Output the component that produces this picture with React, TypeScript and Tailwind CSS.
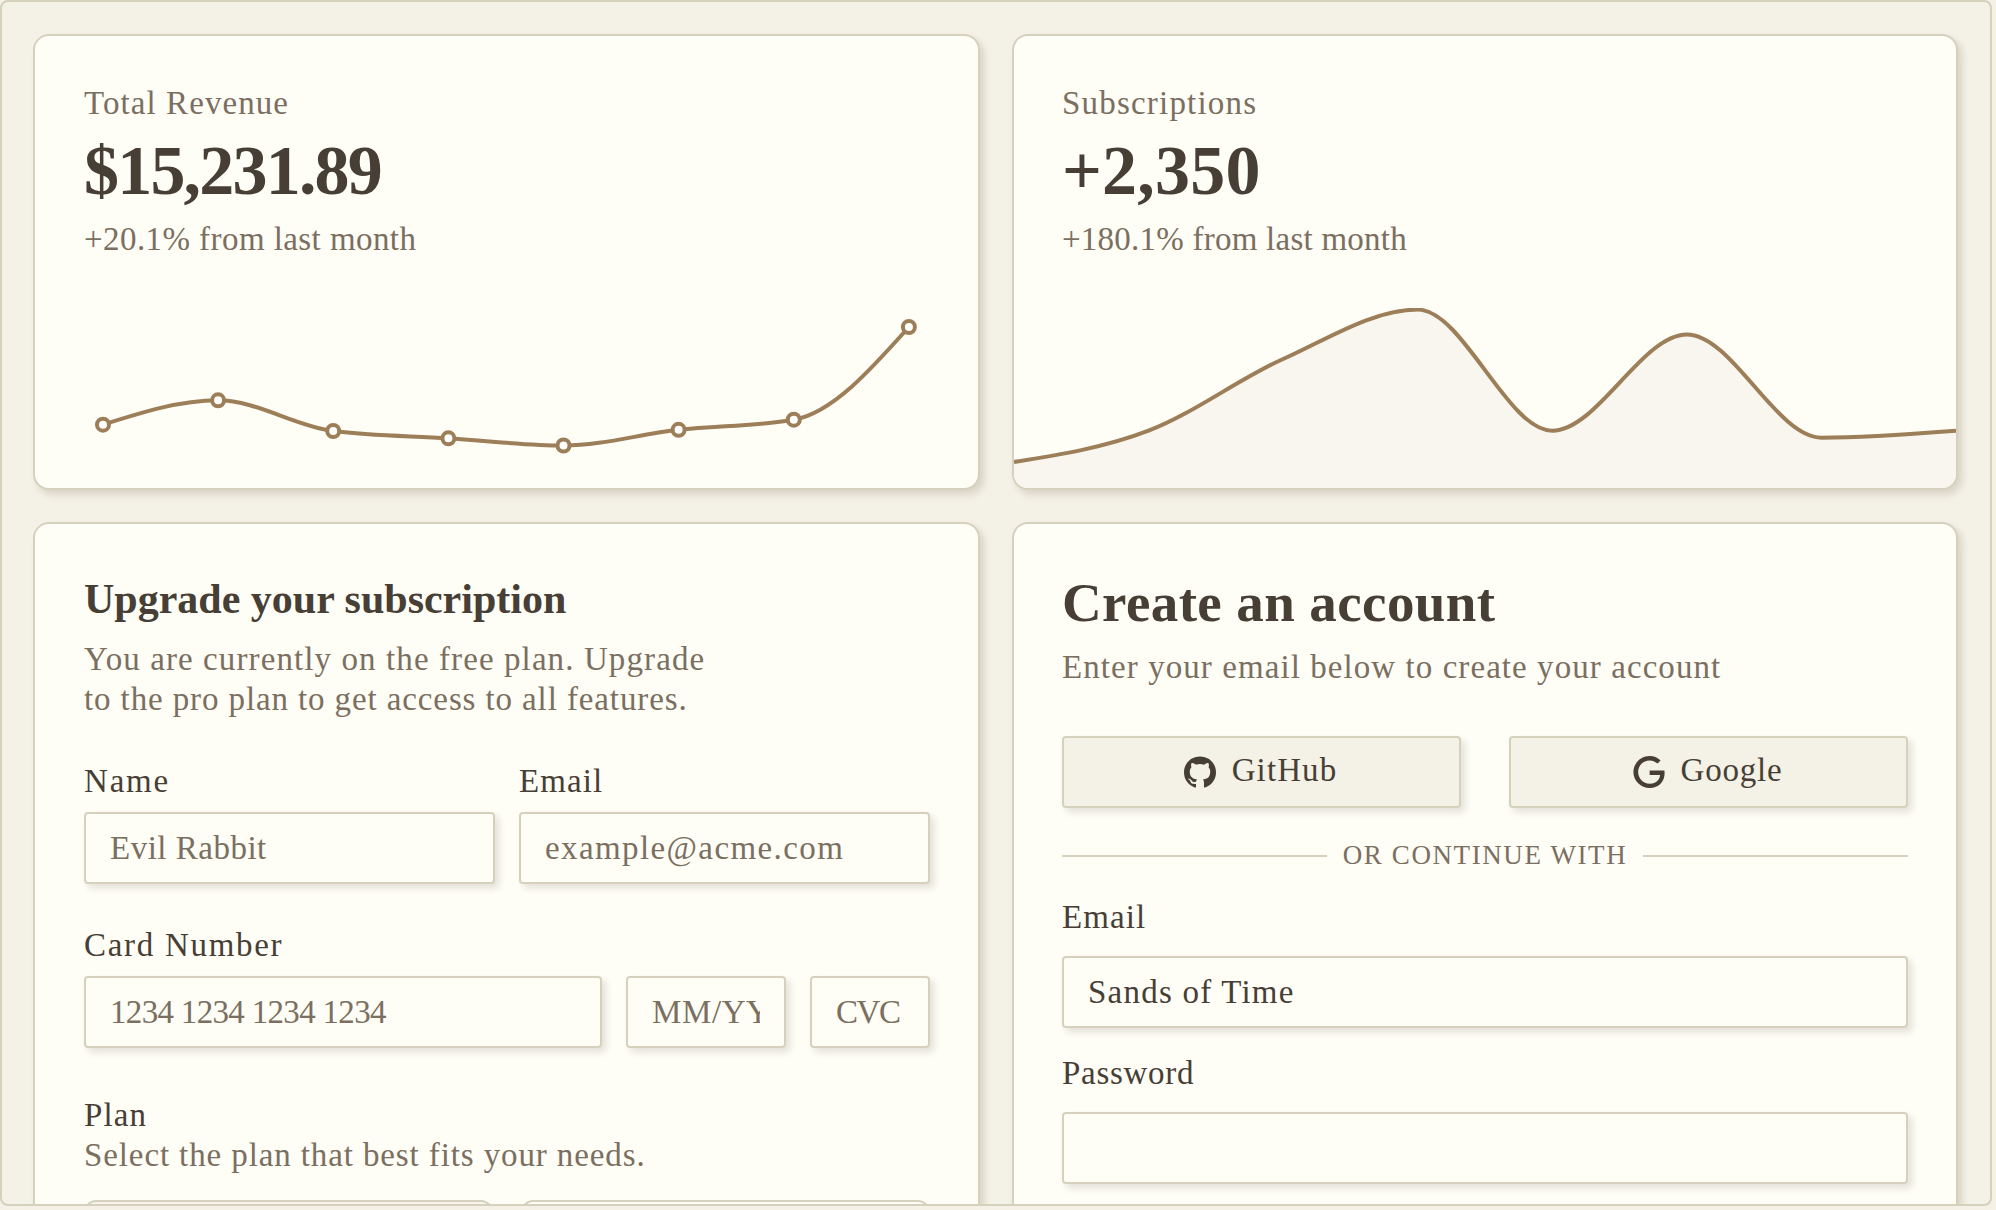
import type { ReactNode } from "react";

type Point = [number, number];

/** Monotone cubic interpolation through the points, as an SVG path. */
function monotonePath(points: Point[]): string {
  const n = points.length;
  const slope = (i: number) =>
    (points[i + 1][1] - points[i][1]) / (points[i + 1][0] - points[i][0]);
  const tangents = points.map((_, i) => {
    if (i === 0 || i === n - 1) return 0;
    const s0 = slope(i - 1);
    const s1 = slope(i);
    const h0 = points[i][0] - points[i - 1][0];
    const h1 = points[i + 1][0] - points[i][0];
    const p = (s0 * h1 + s1 * h0) / (h0 + h1);
    return (
      (Math.sign(s0) + Math.sign(s1)) *
      Math.min(Math.abs(s0), Math.abs(s1), 0.5 * Math.abs(p))
    );
  });
  tangents[0] = (3 * slope(0) - tangents[1]) / 2;
  tangents[n - 1] = (3 * slope(n - 2) - tangents[n - 2]) / 2;

  let d = `M${points[0][0]},${points[0][1]}`;
  for (let i = 0; i < n - 1; i++) {
    const [x0, y0] = points[i];
    const [x1, y1] = points[i + 1];
    const dx = (x1 - x0) / 3;
    d += `C${x0 + dx},${y0 + dx * tangents[i]},${x1 - dx},${y1 - dx * tangents[i + 1]},${x1},${y1}`;
  }
  return d;
}

const revenue: Point[] = [
  [68, 124.7],
  [183.1, 100.3],
  [298.2, 131],
  [413.4, 138.3],
  [528.5, 145.5],
  [643.6, 129.8],
  [758.8, 119.7],
  [873.9, 27],
];

const subscriptions: Point[] = [
  [0, 154],
  [134.6, 122.7],
  [269.1, 51],
  [403.7, 1.6],
  [538.3, 122.7],
  [672.9, 26.4],
  [807.4, 129.7],
  [942, 122.8],
];

function RevenueChart() {
  return (
    <svg className="block h-[186px] w-[943px]" viewBox="0 0 943 186" fill="none">
      <path d={monotonePath(revenue)} stroke="#9c7e58" strokeWidth={4} />
      {revenue.map(([x, y]) => (
        <circle key={x} cx={x} cy={y} r={6} fill="#fff" stroke="#9c7e58" strokeWidth={4} />
      ))}
    </svg>
  );
}

function SubscriptionsChart() {
  const line = monotonePath(subscriptions);
  return (
    <svg className="block h-[180px] w-[942px] overflow-hidden" viewBox="0 0 942 180" fill="none">
      <path d={`${line}L942,180L0,180Z`} fill="#f8f6ef" />
      <path d={line} stroke="#9c7e58" strokeWidth={4} />
    </svg>
  );
}

function GitHubIcon() {
  return (
    <svg className="size-8 shrink-0" viewBox="0 0 438.549 438.549" fill="currentColor">
      <path d="M409.132 114.573c-19.608-33.596-46.205-60.194-79.798-79.8-33.598-19.607-70.277-29.408-110.063-29.408-39.781 0-76.472 9.804-110.063 29.408-33.596 19.605-60.192 46.204-79.8 79.8C9.803 148.168 0 184.854 0 224.63c0 47.78 13.94 90.745 41.827 128.906 27.884 38.164 63.906 64.572 108.063 79.227 5.14.954 8.945.283 11.419-1.996 2.475-2.282 3.711-5.14 3.711-8.562 0-.571-.049-5.708-.144-15.417a2549.81 2549.81 0 01-.144-25.406l-6.567 1.136c-4.187.767-9.469 1.092-15.846 1-6.374-.089-12.991-.757-19.842-1.999-6.854-1.231-13.229-4.086-19.13-8.559-5.898-4.473-10.085-10.328-12.56-17.556l-2.855-6.57c-1.903-4.374-4.899-9.233-8.992-14.559-4.093-5.331-8.232-8.945-12.419-10.848l-1.999-1.431c-1.332-.951-2.568-2.098-3.711-3.429-1.142-1.331-1.997-2.663-2.568-3.997-.572-1.335-.098-2.43 1.427-3.289 1.525-.859 4.281-1.276 8.28-1.276l5.708.853c3.807.763 8.516 3.042 14.133 6.851 5.614 3.806 10.229 8.754 13.846 14.842 4.38 7.806 9.657 13.754 15.846 17.847 6.184 4.093 12.419 6.136 18.699 6.136 6.28 0 11.704-.476 16.274-1.423 4.565-.952 8.848-2.383 12.847-4.285 1.713-12.758 6.377-22.559 13.988-29.41-10.848-1.14-20.601-2.857-29.264-5.14-8.658-2.286-17.605-5.996-26.835-11.14-9.235-5.137-16.896-11.516-22.985-19.126-6.09-7.614-11.088-17.61-14.987-29.979-3.901-12.374-5.852-26.648-5.852-42.826 0-23.035 7.52-42.637 22.557-58.817-7.044-17.318-6.379-36.732 1.997-58.24 5.52-1.715 13.706-.428 24.554 3.853 10.85 4.283 18.794 7.952 23.84 10.994 5.046 3.041 9.089 5.618 12.135 7.708 17.705-4.947 35.976-7.421 54.818-7.421s37.117 2.474 54.823 7.421l10.849-6.849c7.419-4.57 16.18-8.758 26.262-12.565 10.088-3.805 17.802-4.853 23.134-3.138 8.562 21.509 9.325 40.922 2.279 58.24 15.036 16.18 22.559 35.787 22.559 58.817 0 16.178-1.958 30.497-5.853 42.966-3.9 12.471-8.941 22.457-15.125 29.979-6.191 7.521-13.901 13.85-23.131 18.986-9.232 5.14-18.182 8.85-26.84 11.136-8.662 2.286-18.415 4.004-29.263 5.146 9.894 8.562 14.842 22.077 14.842 40.539v60.237c0 3.422 1.19 6.279 3.572 8.562 2.379 2.279 6.136 2.95 11.276 1.995 44.163-14.653 80.185-41.062 108.068-79.226 27.88-38.161 41.825-81.126 41.825-128.906-.01-39.771-9.818-76.454-29.414-110.049z" />
    </svg>
  );
}

function GoogleIcon() {
  return (
    <svg className="size-8 shrink-0" viewBox="0 0 24 24" fill="currentColor">
      <path d="M12.48 10.92v3.28h7.84c-.24 1.84-.853 3.187-1.787 4.133-1.147 1.147-2.933 2.4-6.053 2.4-4.827 0-8.6-3.893-8.6-8.72s3.773-8.72 8.6-8.72c2.6 0 4.507 1.027 5.907 2.347l2.307-2.307C18.747 1.44 16.133 0 12.48 0 5.867 0 .307 5.387.307 12s5.56 12 12.173 12c3.573 0 6.267-1.173 8.373-3.36 2.16-2.16 2.84-5.213 2.84-7.667 0-.76-.053-1.467-.173-2.053H12.48z" />
    </svg>
  );
}

function Card({ className, children }: { className: string; children: ReactNode }) {
  return (
    <section
      className={`shrink-0 rounded-2xl border-2 border-[#d6d1bd] bg-[#fefdf6] shadow-[4px_4px_6px_rgba(70,60,40,0.11),4px_6px_10px_rgba(70,60,40,0.05)] ${className}`}
    >
      {children}
    </section>
  );
}

function Stat(props: {
  label: string;
  labelClass: string;
  value: string;
  valueClass: string;
  note: string;
  noteClass: string;
  className: string;
}) {
  return (
    <div className={`pt-[47px] ${props.className}`}>
      <p className={`h-10 leading-10 text-[#7a6f60] ${props.labelClass}`}>{props.label}</p>
      <p className={`mt-2 h-20 text-[70px] leading-[80px] font-bold ${props.valueClass}`}>{props.value}</p>
      <p className={`mt-2 h-10 leading-10 text-[#7a6f60] ${props.noteClass}`}>{props.note}</p>
    </div>
  );
}

const inputBase =
  "block h-[72px] min-w-0 rounded-[4px] border-2 border-[#d6d1bd] bg-[#fefdf6] px-6 placeholder:text-[#7a6f60] placeholder:opacity-100 outline-none shadow-[4px_4px_6px_rgba(70,60,40,0.10),4px_5px_10px_rgba(70,60,40,0.04)]";

const buttonBase =
  "flex h-[72px] flex-1 items-center justify-center gap-4 rounded-[4px] border-2 border-[#d6d1bd] bg-[#f4f1e6] pr-[2px] shadow-[4px_4px_6px_rgba(70,60,40,0.10),4px_5px_10px_rgba(70,60,40,0.04)]";

export default function App() {
  return (
    <div className="h-[1210px] w-[1996px] overflow-hidden bg-[#f5f1e6] font-['Liberation_Serif',serif] text-[33px] text-[#473f35]">
      <main className="flex h-[1206px] w-[1992px] gap-8 overflow-hidden rounded-lg border-2 border-[#d6d1bd] bg-[#f4f1e6] pt-8 pr-8 pl-[31px]">
        <div className="flex w-[947px] flex-col gap-8">
          <Card className="h-[456px]">
            <Stat
              className="pr-12 pl-[49px]"
              label="Total Revenue"
              labelClass="tracking-[1.08px]"
              value="$15,231.89"
              valueClass="tracking-[-1.8px]"
              note="+20.1% from last month"
              noteClass="tracking-[0.43px]"
            />
            <div className="mt-[41px]">
              <RevenueChart />
            </div>
          </Card>

          <Card className="h-[800px] pt-[51px] pr-12 pl-[49px]">
            <h2 className="h-12 text-[42px] leading-[48px] font-bold">Upgrade your subscription</h2>
            <p className="mt-4 leading-10 whitespace-nowrap text-[#7a6f60]">
              <span className="block tracking-[1.1px]">You are currently on the free plan. Upgrade</span>
              <span className="block tracking-[0.89px]">to the pro plan to get access to all features.</span>
            </p>
            <div className="mt-[42px] grid grid-cols-2 gap-6">
              <label className="flex flex-col gap-[11px]">
                <span className="h-10 leading-10 tracking-[1.8px]">Name</span>
                <input className={`${inputBase} tracking-[0.5px]`} placeholder="Evil Rabbit" />
              </label>
              <label className="flex flex-col gap-[11px]">
                <span className="h-10 leading-10 tracking-[1.1px]">Email</span>
                <input className={`${inputBase} tracking-[1.4px]`} placeholder="example@acme.com" />
              </label>
            </div>
            <div className="mt-[41px]">
              <p className="h-10 leading-10 tracking-[1.7px]">Card Number</p>
              <div className="mt-[11px] flex gap-6">
                <input className={`${inputBase} flex-1 tracking-[-0.68px]`} placeholder="1234 1234 1234 1234" />
                <input className={`${inputBase} w-40 tracking-[0.6px]`} placeholder="MM/YY" />
                <input className={`${inputBase} w-[120px] tracking-[-1.4px]`} placeholder="CVC" />
              </div>
            </div>
            <p className="mt-[47px] h-10 leading-10 tracking-[1.1px]">Plan</p>
            <p className="h-10 leading-10 tracking-[0.89px] text-[#7a6f60]">
              Select the plan that best fits your needs.
            </p>
            <div className="mt-[25px] grid grid-cols-2 gap-7">
              <div className="h-32 rounded-xl border-2 border-[#d6d1bd] bg-[#f8f5ec]" />
              <div className="h-32 rounded-xl border-2 border-[#d6d1bd]" />
            </div>
          </Card>
        </div>

        <div className="flex w-[946px] flex-col gap-8">
          <Card className="h-[456px] overflow-hidden">
            <Stat
              className="px-12"
              label="Subscriptions"
              labelClass="tracking-[1.2px]"
              value="+2,350"
              valueClass="tracking-[0.2px]"
              note="+180.1% from last month"
              noteClass="tracking-[0.24px]"
            />
            <div className="mt-[49px]">
              <SubscriptionsChart />
            </div>
          </Card>

          <Card className="h-[800px] px-12 pt-[49px]">
            <h2 className="h-[60px] text-[55px] leading-[60px] font-bold tracking-[0.4px]">Create an account</h2>
            <p className="mt-[14px] h-10 leading-10 tracking-[1.07px] text-[#7a6f60]">
              Enter your email below to create your account
            </p>
            <div className="mt-[49px] flex gap-12">
              <button className={buttonBase}>
                <GitHubIcon />
                <span className="pb-[2px] tracking-[1.1px]">GitHub</span>
              </button>
              <button className={buttonBase}>
                <GoogleIcon />
                <span className="pb-[2px] tracking-[0.8px]">Google</span>
              </button>
            </div>
            <div className="mt-8 flex h-8 items-center gap-4">
              <span className="h-[2px] flex-1 bg-[#d6d1bd]" />
              <span className="pb-[2px] text-[27px] leading-8 tracking-[1.6px] text-[#7a6f60]">OR CONTINUE WITH</span>
              <span className="h-[2px] flex-1 bg-[#d6d1bd]" />
            </div>
            <label className="mt-[25px] flex flex-col gap-[19px]">
              <span className="h-10 leading-10 tracking-[1.1px]">Email</span>
              <input className={`${inputBase} tracking-[1.22px]`} defaultValue="Sands of Time" />
            </label>
            <label className="mt-[25px] flex flex-col gap-[19px]">
              <span className="h-10 leading-10 tracking-[0.7px]">Password</span>
              <input type="password" className={inputBase} />
            </label>
          </Card>
        </div>
      </main>
    </div>
  );
}
